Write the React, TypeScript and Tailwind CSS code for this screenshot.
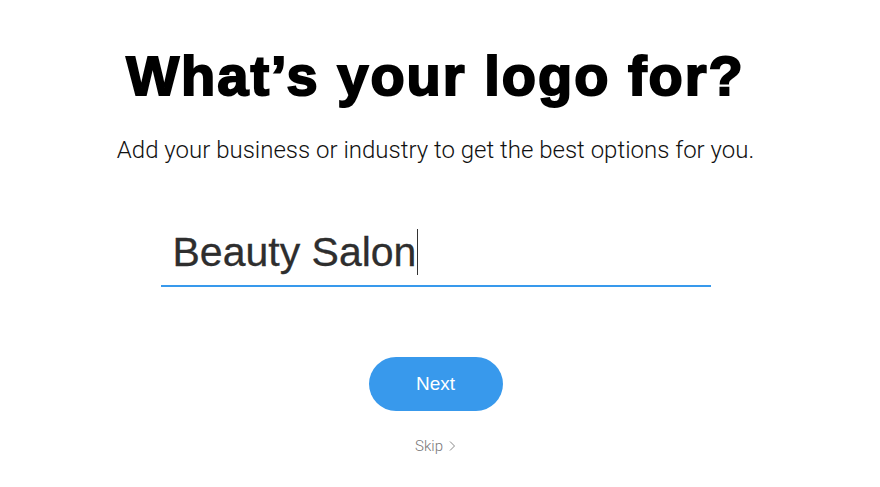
import React from "react";

export default function App() {
  return (
    <div className="w-[880px] h-[487px] bg-white flex flex-col items-center overflow-hidden pr-[9px] font-['Liberation_Sans',Arial,sans-serif]">
      <h1 className="mt-[44px] text-[56px] leading-[64px] font-black text-black tracking-[2px] [-webkit-text-stroke:2px_black]">
        What’s your logo for?
      </h1>
      <p className="mt-[27px] text-[24px] leading-[30px] font-light text-[#111111] font-['Roboto','Liberation_Sans',sans-serif]">
        Add your business or industry to get the best options for you.
      </p>
      <div className="mt-[62px] w-[550px] border-b-2 border-[#3899ec] pl-[12px] pb-[8px] flex items-center">
        <span className="text-[41px] leading-[50px] text-[#2e2e2e] [-webkit-text-stroke:0.3px_#2e2e2e]">Beauty Salon</span>
        <span className="w-px h-[46px] bg-[#333] ml-px"></span>
      </div>
      <button className="mt-[70px] w-[134px] h-[54px] rounded-full bg-[#3899ec] text-white text-[19px]">
        Next
      </button>
      <div className="mt-[24px] flex items-center gap-[5px] text-[15px] font-light text-[#777777] font-['Roboto','Liberation_Sans',sans-serif]">
        <span>Skip</span>
        <svg width="8" height="12" viewBox="0 0 8 12" fill="none" stroke="#888888" strokeWidth="1">
          <path d="M2 1.5 L6.5 6 L2 10.5" />
        </svg>
      </div>
    </div>
  );
}
